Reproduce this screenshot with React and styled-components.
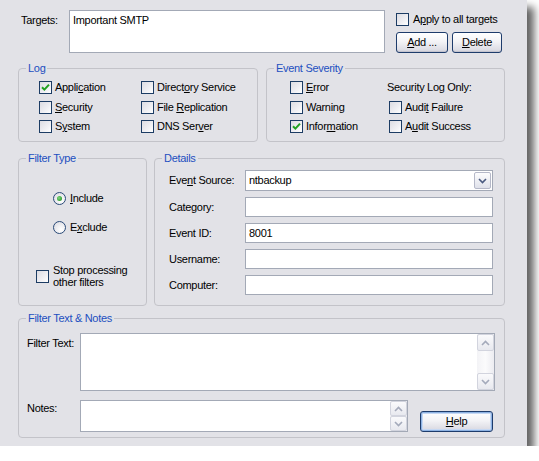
import React from "react";
import styled, { createGlobalStyle } from "styled-components";

const GlobalStyle = createGlobalStyle`
  html, body {
    margin: 0;
    padding: 0;
    background: #ffffff;
  }
  body {
    font-family: "Liberation Sans", Arial, sans-serif;
    font-size: 11px;
    color: #000;
  }
`;

const Dialog = styled.div`
  box-sizing: border-box;
  width: 527px;
  height: 446px;
  background: #e2e2e7;
  padding: 10px 22px 0 18px;
  box-shadow: 7px 7px 8px rgba(0, 0, 0, 0.62);
  display: flex;
  flex-direction: column;
  letter-spacing: -0.3px;
  line-height: 13px;
`;

const U = styled.span`
  text-decoration: underline;
  text-underline-offset: 1px;
`;

/* ---------- top row ---------- */

const TopRow = styled.div`
  display: flex;
  height: 43px;
`;

const TargetLabel = styled.div`
  width: 51px;
  padding: 4px 0 0 3px;
  box-sizing: border-box;
`;

const TextBox = styled.div`
  box-sizing: border-box;
  width: ${(p) => p.w || 248}px;
  height: ${(p) => p.h || 20}px;
  background: #fff;
  border: 1px solid #a3a9b6;
  padding: ${(p) => (p.multi ? "3px 3px" : "0 3px")};
  display: flex;
  align-items: ${(p) => (p.multi ? "flex-start" : "center")};
  position: relative;
`;

const RightCol = styled.div`
  margin-left: 11px;
  display: flex;
  flex-direction: column;
`;

const ApplyRow = styled.label`
  display: flex;
  align-items: center;
  margin-top: 3px;
  gap: 4px;
`;

const ButtonRow = styled.div`
  display: flex;
  gap: 4px;
  margin-top: 6px;
`;

const Button = styled.button`
  box-sizing: border-box;
  width: ${(p) => p.w}px;
  height: 21px;
  padding: 0;
  font: inherit;
  letter-spacing: inherit;
  color: #000;
  border: 1px solid #1e3c6c;
  border-radius: 3px;
  background: linear-gradient(#ffffff 0%, #f3f3f6 45%, #dcdce4 90%, #c9c9d4 100%);
  box-shadow: ${(p) =>
    p.focused
      ? "inset 0 0 0 1px #8db2e3, inset 0 0 0 2px #c6d8f3"
      : "inset 0 -1px 0 #c4c4cf"};
`;

/* ---------- check boxes / radios ---------- */

const Box = styled.span`
  box-sizing: border-box;
  flex: none;
  width: 13px;
  height: 13px;
  border: 1px solid #1c3c64;
  background: linear-gradient(135deg, #dcdce2 0%, #eeeef2 55%, #ffffff 100%);
  display: inline-flex;
  align-items: center;
  justify-content: center;
`;

const Round = styled(Box)`
  border-radius: 50%;
  border-color: #2a4a78;
  background: radial-gradient(circle at 65% 70%, #ffffff 0%, #f0f0f3 40%, #d6d6de 100%);
`;

const Dot = styled.span`
  width: 5px;
  height: 5px;
  border-radius: 50%;
  background: radial-gradient(circle at 40% 40%, #7fd77f 0%, #33a033 70%, #218a21 100%);
`;

function Check({ checked }) {
  return (
    <Box>
      {checked && (
        <svg width="9" height="9" viewBox="0 0 9 9">
          <path d="M1 4.2 L3.4 6.6 L8 1.6" fill="none" stroke="#21a121" strokeWidth="2" />
        </svg>
      )}
    </Box>
  );
}

function Radio({ checked }) {
  return <Round>{checked && <Dot />}</Round>;
}

const Option = styled.div`
  display: flex;
  align-items: center;
  gap: 3px;
  height: 19.5px;
  padding-left: ${(p) => p.indent || 0}px;
`;

/* ---------- group boxes ---------- */

const Group = styled.fieldset`
  box-sizing: border-box;
  margin: 0;
  padding: 0;
  width: ${(p) => p.w}px;
  height: ${(p) => p.h}px;
  border: 1px solid #c3c3c9;
  border-radius: 4px;
  min-width: 0;
`;

const Legend = styled.legend`
  margin-left: 7px;
  padding: 0 2px;
  color: #1d4fc0;
  line-height: 13px;
`;

const Row = styled.div`
  display: flex;
  gap: ${(p) => p.gap}px;
  margin-top: ${(p) => p.top}px;
`;

const OptGrid = styled.div`
  display: grid;
  grid-template-columns: ${(p) => p.col}px auto;
  padding: 3px 0 0 ${(p) => p.left}px;
`;

const PlainText = styled.div`
  height: 19.5px;
  display: flex;
  align-items: center;
`;

/* filter type */

const TypeBody = styled.div`
  display: flex;
  flex-direction: column;
  padding: 26px 0 0 34px;
  gap: 14px;
`;

const RadioRow = styled.div`
  display: flex;
  align-items: center;
  gap: 4px;
  height: 15px;
`;

const StopRow = styled.div`
  display: flex;
  align-items: center;
  gap: 4px;
  margin: 15px 0 0 -17px;
  line-height: 12px;
`;

/* details */

const DetailBody = styled.div`
  display: flex;
  flex-direction: column;
  gap: 6px;
  padding: 5px 0 0 14px;
`;

const FieldRow = styled.div`
  display: flex;
  align-items: center;
`;

const FieldLabel = styled.div`
  width: ${(p) => p.w || 76}px;
  align-self: ${(p) => (p.top ? "flex-start" : "center")};
  padding-top: ${(p) => p.pt || 0}px;
  flex: none;
`;

const ComboButton = styled.span`
  position: absolute;
  right: 1px;
  top: 1px;
  width: 17px;
  height: 17px;
  box-sizing: border-box;
  border: 1px solid #b5b8c8;
  border-radius: 2px;
  background: linear-gradient(#fdfdfe, #dfe1ea);
  display: flex;
  align-items: center;
  justify-content: center;
`;

/* scroll bars */

const ScrollBar = styled.div`
  position: absolute;
  right: 0;
  top: 0;
  bottom: 0;
  width: 17px;
  background: linear-gradient(90deg, #f3f3f6, #fbfbfc 50%, #ececf1);
  display: flex;
  flex-direction: column;
  justify-content: space-between;
`;

const ScrollBtn = styled.span`
  box-sizing: border-box;
  height: ${(p) => p.h}px;
  border: 1px solid #d2d4de;
  border-radius: 2px;
  background: linear-gradient(#fafafc, #e8e9ef);
  display: flex;
  align-items: center;
  justify-content: center;
`;

function Arrow({ up, color = "#a4aabb" }) {
  return (
    <svg width="9" height="6" viewBox="0 0 9 6">
      <path
        d={up ? "M1 5 L4.5 1.5 L8 5" : "M1 1 L4.5 4.5 L8 1"}
        fill="none"
        stroke={color}
        strokeWidth="1.6"
      />
    </svg>
  );
}

function Scroll({ btn }) {
  return (
    <ScrollBar>
      <ScrollBtn h={btn}>
        <Arrow up />
      </ScrollBtn>
      <ScrollBtn h={btn}>
        <Arrow />
      </ScrollBtn>
    </ScrollBar>
  );
}

const NotesBody = styled.div`
  display: flex;
  flex-direction: column;
  padding: 8px 0 0 8px;
`;

const NotesRow = styled.div`
  display: flex;
  align-items: flex-start;
  margin-top: 9px;
`;

const HelpWrap = styled.div`
  margin: 11px 0 0 12px;
`;

export default function App() {
  return (
    <>
      <GlobalStyle />
      <Dialog>
        <TopRow>
          <TargetLabel>Targets:</TargetLabel>
          <TextBox w={316} h={43} multi>
            Important SMTP
          </TextBox>
          <RightCol>
            <ApplyRow>
              <Check />
              <span>
                A<U>p</U>ply to all targets
              </span>
            </ApplyRow>
            <ButtonRow>
              <Button w={52}>
                <U>A</U>dd ...
              </Button>
              <Button w={50}>
                <U>D</U>elete
              </Button>
            </ButtonRow>
          </RightCol>
        </TopRow>

        <Row gap={8} top={9}>
          <Group w={240} h={80}>
            <Legend>Log</Legend>
            <OptGrid col={102} left={20}>
              <Option>
                <Check checked />
                <span>
                  Appli<U>c</U>ation
                </span>
              </Option>
              <Option>
                <Check />
                <span>
                  Direct<U>o</U>ry Service
                </span>
              </Option>
              <Option>
                <Check />
                <span>
                  <U>S</U>ecurity
                </span>
              </Option>
              <Option>
                <Check />
                <span>
                  File <U>R</U>eplication
                </span>
              </Option>
              <Option>
                <Check />
                <span>
                  S<U>y</U>stem
                </span>
              </Option>
              <Option>
                <Check />
                <span>
                  DNS Ser<U>v</U>er
                </span>
              </Option>
            </OptGrid>
          </Group>
          <Group w={239} h={80}>
            <Legend>Event Severity</Legend>
            <OptGrid col={97} left={23}>
              <Option>
                <Check />
                <span>
                  <U>E</U>rror
                </span>
              </Option>
              <PlainText>Security Log Only:</PlainText>
              <Option>
                <Check />
                <span>Warning</span>
              </Option>
              <Option indent={2}>
                <Check />
                <span>
                  Audi<U>t</U> Failure
                </span>
              </Option>
              <Option>
                <Check checked />
                <span>
                  Infor<U>m</U>ation
                </span>
              </Option>
              <Option indent={2}>
                <Check />
                <span>
                  A<U>u</U>dit Success
                </span>
              </Option>
            </OptGrid>
          </Group>
        </Row>

        <Row gap={7} top={10}>
          <Group w={129} h={154}>
            <Legend>Filter Type</Legend>
            <TypeBody>
              <RadioRow>
                <Radio checked />
                <span>
                  <U>I</U>nclude
                </span>
              </RadioRow>
              <RadioRow>
                <Radio />
                <span>
                  E<U>x</U>clude
                </span>
              </RadioRow>
              <StopRow>
                <Check />
                <span>
                  Stop processing
                  <br />
                  other filters
                </span>
              </StopRow>
            </TypeBody>
          </Group>
          <Group w={351} h={154}>
            <Legend>Details</Legend>
            <DetailBody>
              <FieldRow>
                <FieldLabel>
                  Eve<U>n</U>t Source:
                </FieldLabel>
                <TextBox h={21}>
                  ntbackup
                  <ComboButton>
                    <Arrow color="#4a5a80" />
                  </ComboButton>
                </TextBox>
              </FieldRow>
              <FieldRow>
                <FieldLabel>Category:</FieldLabel>
                <TextBox />
              </FieldRow>
              <FieldRow>
                <FieldLabel>Event ID:</FieldLabel>
                <TextBox>8001</TextBox>
              </FieldRow>
              <FieldRow>
                <FieldLabel>Username:</FieldLabel>
                <TextBox />
              </FieldRow>
              <FieldRow>
                <FieldLabel>Computer:</FieldLabel>
                <TextBox />
              </FieldRow>
            </DetailBody>
          </Group>
        </Row>

        <Row gap={0} top={6}>
          <Group w={487} h={126}>
            <Legend>Filter Text &amp; Notes</Legend>
            <NotesBody>
              <FieldRow>
                <FieldLabel w={53} top pt={4}>
                  Filter Text:
                </FieldLabel>
                <TextBox w={415} h={58}>
                  <Scroll btn={17} />
                </TextBox>
              </FieldRow>
              <NotesRow>
                <FieldLabel w={53} top pt={2}>
                  Notes:
                </FieldLabel>
                <TextBox w={328} h={32}>
                  <Scroll btn={15} />
                </TextBox>
                <HelpWrap>
                  <Button w={73} focused>
                    <U>H</U>elp
                  </Button>
                </HelpWrap>
              </NotesRow>
            </NotesBody>
          </Group>
        </Row>
      </Dialog>
    </>
  );
}
